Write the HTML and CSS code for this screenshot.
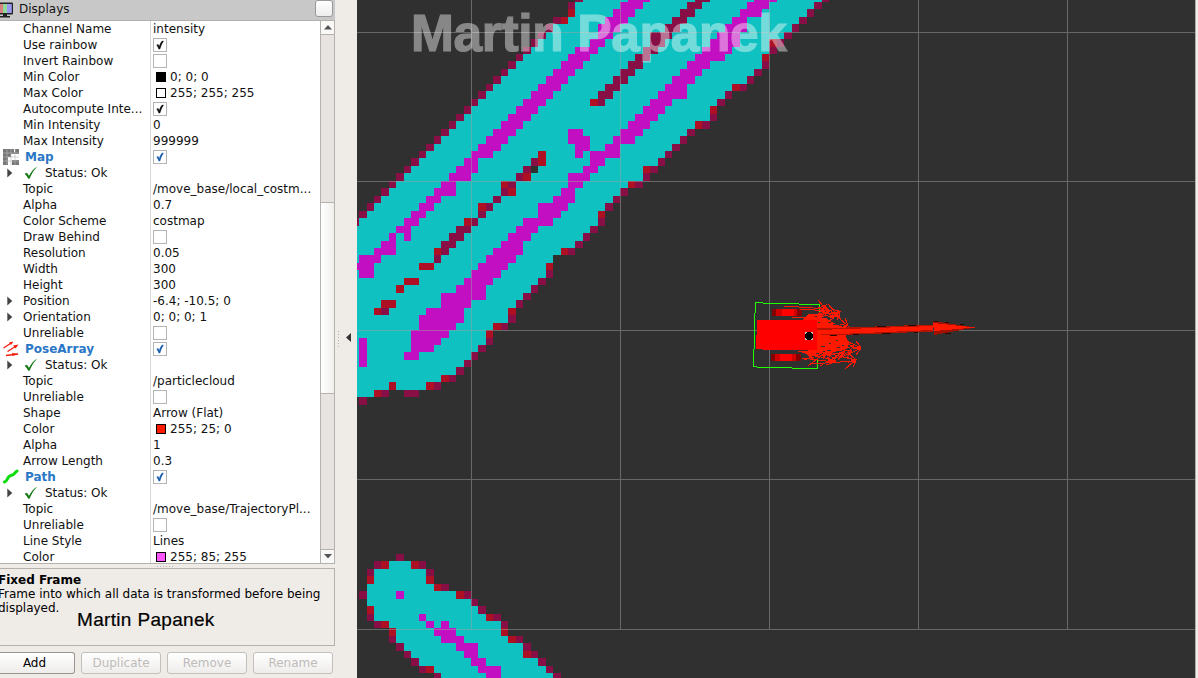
FILE: index.html
```html
<!DOCTYPE html>
<html lang="en">
<head>
<meta charset="utf-8">
<title>Displays</title>
<link rel="stylesheet" href="styles.css">
</head>
<body>
<svg class="defs" width="0" height="0">
  <symbol id="tick" viewBox="0 0 14 14"><path d="M3.400 7 5.200 6.100 6.100 8.200C7 5.600 8 3.600 9.400 2.800L10.900 2.900C9.200 5.200 8 8 7.100 11.200H5.600C5.100 9.500 4.400 8.300 3.400 7z" fill="currentColor"/></symbol>
  <symbol id="ok" viewBox="0 0 14 14"><path d="M.6 7.700 3 6.700 5 9.700C7 6 9.500 2.800 13.400.6 10 4 7.500 8 5.600 12.800H4.300C3.200 10.800 2 9 .6 7.700z" fill="#1c7d1c"/></symbol>
  <symbol id="exp" viewBox="0 0 6 10"><path d="M.3.5 5.300 5 .3 9.500z" fill="#444"/></symbol>
</svg>
<div class="app">
  <aside class="sidebar">
    <header class="title">
      <svg class="monitor" width="14" height="18" viewBox="0 0 14 18"><rect x="-3" y="1.500" width="16" height="12" rx="1" fill="#222"/><path d="M-2 3H3v9h-5z" fill="#d98080"/><path d="M3 3h4v9H3z" fill="#8fdc9a"/><path d="M7 3h4.800v9H7z" fill="#9a9af0"/><path d="M3 13h4v2H3zM0 15h10v1.500H0z" fill="#222"/></svg>
      <span>Displays</span><button class="close" aria-label="Close"></button>
    </header>
    <div class="list">
      <div class="rows" id="rows"></div>
      <div class="scroll">
        <div class="step"><svg width="8" height="5"><path d="M0 4.500 4 0l4 4.500z" fill="#555"/></svg></div>
        <div class="track"><div class="thumb"></div></div>
        <div class="step down"><svg width="8" height="5"><path d="M0 0h8L4 4.500z" fill="#555"/></svg></div>
      </div>
    </div>
    <div class="grip"><i></i></div>
    <section class="help">
      <b>Fixed Frame</b>
      <p>Frame into which all data is transformed before being displayed.</p>
      <span class="author">Martin Papanek</span>
    </section>
    <footer class="buttons">
      <button class="btn first">Add</button><button class="btn off">Duplicate</button><button class="btn off">Remove</button><button class="btn off">Rename</button>
    </footer>
  </aside>
  <div class="splitter"><i></i><svg width="5" height="9"><path d="M5 0v9L0 4.500z" fill="#333"/></svg></div>
  <main class="view">
    <svg width="838" height="678" viewBox="357 0 838 678">
      <g id="costmap" shape-rendering="crispEdges"></g>
      <path d="M471 0h1v629h-1zM620 0h1v629h-1zM769 0h1v629h-1zM918 0h1v629h-1zM1067 0h1v629h-1zM357 32h838v1H357zM357 181h838v1H357zM357 330h838v1H357zM357 479h838v1H357zM357 629h838v1H357z" fill="#a0a0a4" fill-opacity=".5"/>
      <g shape-rendering="crispEdges">
        <path d="M755.500 313V302.500H763M763 303.500h36M799 304.500h20.500V315M818.500 345v7M817.500 358v10.500H792M792 367.500H757M757 366.500h-3.500V349M754.500 349V313" fill="none" stroke="#1fff00"/>
        <path d="M772 309h30v7h-30zM771 354h30v7h-30z" fill="#d00000"/>
        <path d="M782 309h12v7h-12zM780 354h12v7h-12z" fill="#f00"/>
        <path d="M772 309h4v7h-4zM797 309h5v7h-5zM771 354h4v7h-4zM796 354h5v7h-5z" fill="#850000"/>
        <path d="M802 320 809 314 822 315 829 320 837 325 846 328 846 337 849 342 847 349 840 351 834 351 830 357 822 353 812 359 806 354 799 351 817 350 817 320z" fill="#ff1900"/>
        <path id="poses" fill="none" stroke="#ff1900"/>
        <path d="M822 317.500h3M828 322.500h3M833 324.500h3M821 346.500h4M829 343.500h2M837 347.500h3M827 350.500h4M816 353.500h3M831 355.500h2M823 351.500h2M842 345.500h2M836 340.500h2M815 316.500h2M838 351.500h3M812 356.500h3M818 322.500h2" stroke="#303030" fill="none"/>
        <path d="M757 320h60v30h-54v-1h-7v-14h1z" fill="red"/>
        <path d="M817 328.500 933 324.500V331.500L830 335.500 817 334z" fill="#b31300"/>
        <path d="M817 330 933 326V330L850 333.500 817 333.500z" fill="#ff1900"/>
        <path d="M933 321 975 327.500 934 335z" fill="#a31000"/>
        <path d="M933 323 975 327.500 934 331z" fill="#ff1900"/>
        <path d="M877 326.500h9M908 325.500h8M934 321.500h4M945 322.500h4M960 324.500h4M853 334.500h6M882 333.500h9M914 332.500h4M945 333.500h6M830 335.500h7" stroke="#2b0500"/>
        <path d="M805 332h8v8h-8z" fill="#bbb"/><path d="M807 332h4v1h1v1h1v4h-1v1h-1v1h-4v-1h-1v-1h-1v-4h1v-1h1z" fill="#000"/>
      </g>
      <text class="mark" x="411" y="51" textLength="376" lengthAdjust="spacing">Martin Papanek</text>
    </svg>
  </main>
</div>
<script src="main.js"></script>
</body>
</html>
```

FILE: styles.css
```css
body { margin: 0; overflow: hidden; background: #efebe7; font: 12px/16px "DejaVu Sans", sans-serif; color: #111; }
.defs { position: absolute; }
.app { display: flex; width: 1198px; height: 678px; }
.sidebar { display: flex; flex-direction: column; width: 335px; flex: none; }
.title { box-sizing: border-box; display: flex; align-items: center; height: 21px; background: #c8c8c8; border-bottom: 1px solid #b5b0ab; padding-right: 2px; line-height: 17px; }
.title span { margin-left: 5px; margin-top: -2px; flex: 1; }
.monitor { flex: none; margin-top: -1px; }
.close { box-sizing: border-box; width: 18px; height: 17px; margin-top: -3px; padding: 0; border: 1px solid #999; border-radius: 3px; background: linear-gradient(#fff, #ededed); }
.list { box-sizing: border-box; display: flex; height: 543px; background: #fff; border-right: 1px solid #b5b2ae; border-bottom: 1px solid #b5b2ae; overflow: hidden; }
.rows { width: 320px; }
.row { display: flex; height: 16px; white-space: nowrap; }
.name { box-sizing: border-box; width: 151px; padding-left: 23px; display: flex; border-right: 1px solid #d6d6d6; }
.val { display: flex; align-items: center; padding-left: 2px; }
.name.group { padding-left: 3px; color: #2a76c6; font-weight: bold; }
.name.group svg { width: 16px; height: 16px; margin-right: 6px; }
.name.exp { padding-left: 7px; }
.exp .arrow { width: 6px; height: 10px; margin: 3px 10px 0 0; }
.ok { width: 14px; height: 14px; margin: 1px 7px 0 1px; }
.check { box-sizing: border-box; width: 14px; height: 14px; border: 1px solid #b4b4b4; color: #111; margin-left: 0; }
.check svg { display: block; width: 14px; height: 14px; margin: -1px; }
.check.blue { color: #1c60ae; }
.swatch { box-sizing: border-box; width: 10px; height: 10px; border: 1px solid #000; margin: 0 4px 0 3px; }
.scroll { box-sizing: border-box; width: 14px; border-left: 1px solid #b5b2ae; display: flex; flex-direction: column; background: #e6e3e0; }
.step { box-sizing: border-box; height: 14px; display: flex; align-items: center; justify-content: center; background: #f9f9f8; border-bottom: 1px solid #b5b2ae; }
.step.down { border: 0; border-top: 1px solid #b5b2ae; }
.track { flex: 1; padding-top: 167px; }
.thumb { box-sizing: border-box; height: 192px; background: linear-gradient(90deg, #fff, #f1f0ee); border: solid #b5b2ae; border-width: 1px 0; }
.grip { height: 4px; display: flex; justify-content: center; align-items: center; }
.grip i { width: 17px; height: 1px; background: repeating-linear-gradient(90deg, #b5b2ae 0 1px, transparent 1px 3px); margin-left: -5px; }
.help { position: relative; box-sizing: border-box; height: 78px; border: 1px solid #b5b2ae; border-left: 0; padding-top: 4px; line-height: 14px; color: #000; }
.help b, .help p { display: block; margin: 0 0 0 -2px; }
.author { position: absolute; left: 77px; top: 43px; font: 19px/16px "Liberation Sans", sans-serif; letter-spacing: .33px; white-space: nowrap; -webkit-text-stroke: .2px #000; }
.buttons { display: flex; gap: 6px; padding-top: 6px; }
.btn { box-sizing: border-box; width: 80px; height: 22px; padding: 0; font: inherit; color: #000; border: 1px solid #999591; border-radius: 3px; background: linear-gradient(#fff, #efedeb); }
.btn.first { width: 75px; border-left: 0; border-radius: 0 3px 3px 0; padding-right: 5px; }
.btn.off { color: #bebcba; border-color: #c2bfbc; }
.splitter { width: 22px; flex: none; display: flex; align-items: center; }
.splitter i { width: 1px; height: 16px; margin: 0 7px 0 3px; background: repeating-linear-gradient(#b5b2ae 0 1px, transparent 1px 3px); }
.splitter svg { margin-top: -3px; }
.view { width: 838px; background: #303030; border-right: 1px solid #b0aeab; }
.view > svg { display: block; }
.mark { font: bold 51.500px "Liberation Sans", sans-serif; fill: #fff; stroke: #fff; stroke-width: 1.200px; opacity: .42; }
```

FILE: main.js
```js
const icons = {
  Map: '<svg viewBox="0 0 16 16"><path d="M0 0h16v5H8v3H5v8H0z" fill="#777"/><path d="M9 11h7v5H9z" fill="#777"/><path d="M4 0v16M8 0v16M12 0v16M0 4h16M0 8h16M0 12h16" stroke="#bbb" stroke-width=".6"/><path d="M11 0h1v3h-1z" fill="#fff"/></svg>',
  PoseArray: '<svg viewBox="0 0 16 16"><g stroke="#f21d0d" stroke-width="1.300" fill="#f21d0d"><path d="M.5 7 9 1.500M4.500 10.500 14 4.500M3 14.500 15 13"/><path d="M10.500.5 6 1.500 8 4zM15.500 3.500 10 4.500 12.500 7.500zM15.500 13 9 12 9.500 15z" stroke="none"/></g></svg>',
  Path: '<svg viewBox="0 0 16 16"><path d="M1.500 13C5 12 4 7 8 6.500S12 3 14 2" fill="none" stroke="#0cdc0c" stroke-width="3" stroke-linecap="round"/></svg>'
};

// [name, value, kind]; kinds: on/off checkbox, group, status, tree, or a swatch colour
const props = [
  ['Channel Name', 'intensity'], ['Use rainbow', '', 'on'], ['Invert Rainbow', '', 'off'],
  ['Min Color', '0; 0; 0', '#000'], ['Max Color', '255; 255; 255', '#fff'],
  ['Autocompute Inte...', '', 'on'], ['Min Intensity', '0'], ['Max Intensity', '999999'],
  ['Map', '', 'group'], ['Status: Ok', '', 'status'], ['Topic', '/move_base/local_costm...'],
  ['Alpha', '0.7'], ['Color Scheme', 'costmap'], ['Draw Behind', '', 'off'], ['Resolution', '0.05'],
  ['Width', '300'], ['Height', '300'], ['Position', '-6.4; -10.5; 0', 'tree'],
  ['Orientation', '0; 0; 0; 1', 'tree'], ['Unreliable', '', 'off'],
  ['PoseArray', '', 'group'], ['Status: Ok', '', 'status'], ['Topic', '/particlecloud'],
  ['Unreliable', '', 'off'], ['Shape', 'Arrow (Flat)'], ['Color', '255; 25; 0', '#ff1900'],
  ['Alpha', '1'], ['Arrow Length', '0.3'],
  ['Path', '', 'group'], ['Status: Ok', '', 'status'], ['Topic', '/move_base/TrajectoryPl...'],
  ['Unreliable', '', 'off'], ['Line Style', 'Lines'], ['Color', '255; 85; 255', '#ff55ff']
];
const arrow = '<svg class="arrow"><use href="#exp"/></svg>';
document.getElementById('rows').innerHTML = props.map(([name, value, kind = '']) => {
  let cls = 'name', pre = '', val = value;
  if (kind === 'group') { cls += ' group'; pre = icons[name]; }
  if (kind === 'status') { cls += ' exp'; pre = arrow + '<svg class="ok"><use href="#ok"/></svg>'; }
  if (kind === 'tree') { cls += ' exp'; pre = arrow; }
  if (kind === 'off') val = '<span class="check"></span>';
  if (kind === 'on' || kind === 'group') val = `<span class="check${kind === 'group' ? ' blue' : ''}"><svg><use href="#tick"/></svg></span>`;
  if (kind[0] === '#') val = `<span class="swatch" style="background:${kind}"></span>${value}`;
  return `<div class="row"><div class="${cls}">${pre}<span>${name}</span></div><div class="val">${val}</div></div>`;
}).join('');

// Costmap cells: colour, first row, then one entry per row. A run is "start:end" with an exclusive end, or one column.
const layers = [
  ['#0fc1c1', -1, '30:62|29:61|29:60|28:59|26:58|25:57|24:55|23:55|22:54|21:54|20:53|19:52|18:50|17:49|16:48|15:47|14:47|13:45|12:44|11:43|10:42|9:41|8:40|7:38|6:38|5:36|4:35|3:34|2:33|1:32|0:32|-1:31|-1:30|-1:29|-1:27|-1:26|-1:25|-1:25|-1:24|-1:23|-1:22|-1:21|-1:20|-1:20|-1:18|-1:17|-1:17|-1:16|-1:15|-1:14|-1:13|-1:11|-1:9|-1:2'],
  ['#c10fc1', -1, '36:39 53:56|35:38 52:55|34:37 51:54|33:36 50:52|32:35 49:52|32:34 48:51|31:33 47:51|29:32 46:50|28:31 45:49|27:30 44:47|26:29 43:46|25:28 42:45|24:27 41:44|23:26 40:44|22:25 39:42|21:24 38:41|20:23 37:40|19:22 36:39|18:21 28:30 35:38|17:20 28:31 34:37|16:19 29:31 33:35|15:18 29 31:35|14:16 31:33|13:16 30:32|12:15 28:31|11:13 28:30|10:13 27:29|9:11 26:29|8:10 24:28|7:9 24:27|6:8 22:26|5:7 21:24|4 6 20:23|3:5 19:22|2:5 18:22|0:3 17:21|-1:2 16:20|0:2 15:19|14:18|13:17|11:17|11:15|9:14|8:14|8:13|7:12|0 7:11|0 7:10|0 6:8|0'],
  ['#870f46', -1, '29 45:47 62|28 44:46 61|43:45 60|26 42:44 59|25 41:43 58|24 39:42 57|23 39:41 56|22 38:40 55|21 37:39|20 36:38 54|19 35:37 53|18 34:36 52|17 33:35 51|16 32:34 49|15 32 48|14|13 47|12 46|11 44|10 43|9 42|8 41|7 23 40|6 22 39|5 21 38|4 20 37|3 19 35|2 18 34|1 17 33|0 16|-1 15 32|13:15 31|12:14 30|11:13 29|11 28|10||25|24|23|22|21|3|20|19||17|16|15|14|13|12|10|3 6:8|0'],
  ['#af0f23', 1, '28|27|||55||54||||50||31|47||45||||24|24|38|22|19 36|20||16|32|14||||10 27||8:10 25||6:8|5||3:5|2 20||18|17||||||11|4 9|2'],
  ['#303030', 22, '23'],
  ['#0fc1c1', 75, '4:7|2:9|2:9|1:10|1:13|1:15|2:16|2:17|4:19|5:19|5:20|6:22|7:22|8:24|10:25|11:26'],
  ['#c10fc1', 79, '5|||8|9 11|10:13|11:14|13:16|14:16|15:17|16:19|17:19'],
  ['#870f46', 74, '5|2 8|1 9||11|0 14|15|16|1 18|2 19||4 21|5 22|6 23|7 24|8 25|10 26'],
  ['#af0f23', 75, '3 7||1 9|10|13||1|17|3|4 19|20||22||9|']
];
const cx = i => Math.max(357, Math.round(359.1 + 7.46 * i));
const cy = j => Math.round(1.8 + 7.46 * j);
document.getElementById('costmap').innerHTML = layers.map(([fill, top, data]) => {
  let d = '';
  data.split('|').forEach((line, n) => line.split(' ').filter(Boolean).forEach(run => {
    const [a, b = +a + 1] = run.split(':').map(Number);
    d += `M${cx(a)} ${cy(top + n)}H${cx(b)}V${cy(top + n + 1)}H${cx(a)}z`;
  }));
  return `<path fill="${fill}" d="${d}"/>`;
}).join('');

// Particle poses: tail and tip of each flat arrow
const poses = [
  [784, 306, 828, 309], [800, 309, 830, 311], [808, 316, 840, 312], [818, 300, 833, 318], [828, 304, 840, 318],
  [826, 324, 840, 312], [830, 310, 848, 326], [812, 322, 826, 305], [806, 318, 829, 311], [820, 350, 847, 326],
  [826, 330, 861, 348], [840, 338, 861, 348], [838, 359, 861, 348], [832, 352, 854, 346], [845, 369, 856, 360],
  [822, 352, 856, 360], [810, 364, 855, 361], [820, 366, 842, 353], [804, 360, 830, 350], [808, 366, 826, 352],
  [798, 351, 836, 361], [802, 358, 834, 362], [814, 357, 845, 352], [826, 362, 852, 351], [792, 317, 820, 318]
];
document.getElementById('poses').setAttribute('d', poses.map(([x1, y1, x2, y2]) => {
  const t = Math.atan2(y2 - y1, x2 - x1);
  const wing = a => `${(x2 - 8 * Math.cos(t + a)).toFixed(1)} ${(y2 - 8 * Math.sin(t + a)).toFixed(1)}`;
  return `M${x1} ${y1}L${x2} ${y2}M${wing(.5)}L${x2} ${y2}L${wing(-.5)}`;
}).join(''));
```
